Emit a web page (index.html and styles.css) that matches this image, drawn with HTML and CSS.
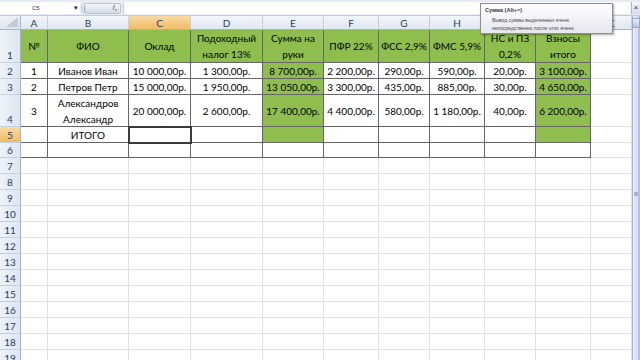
FILE: index.html
```html
<!DOCTYPE html>
<html lang="ru">
<head>
<meta charset="utf-8">
<title>Excel</title>
<link rel="stylesheet" href="styles.css">
</head>
<body>
<div class="fbar">
  <div class="namebox"><span class="nb-text">C5</span><span class="nb-arrow">▾</span></div>
  <div class="fxbtn"><span class="fx-circle"></span><span class="fx">f<sub>x</sub></span></div>
  <div class="finput"></div>
  <div class="fclose">×</div>
</div>
<div class="sheet-wrap">
  <div class="sheet">
    <div class="corner"></div>
    <div class="ch">A</div><div class="ch">B</div><div class="ch hl">C</div><div class="ch">D</div><div class="ch">E</div><div class="ch">F</div><div class="ch">G</div><div class="ch">H</div><div class="ch">I</div><div class="ch">J</div><div class="ch">K</div>

    <div class="rh">1</div>
    <div class="c b g">№</div><div class="c b g">ФИО</div><div class="c b g">Оклад</div><div class="c b g">Подоходный<br>налог 13%</div><div class="c b g">Сумма на<br>руки</div><div class="c b g">ПФР 22%</div><div class="c b g">ФСС 2,9%</div><div class="c b g">ФМС 5,9%</div><div class="c b g">НС и ПЗ<br>0,2%</div><div class="c b g">Взносы<br>итого</div><div class="c"></div>

    <div class="rh">2</div>
    <div class="c b">1</div><div class="c b">Иванов Иван</div><div class="c b">10 000,00р.</div><div class="c b">1 300,00р.</div><div class="c b g">8 700,00р.</div><div class="c b">2 200,00р.</div><div class="c b">290,00р.</div><div class="c b">590,00р.</div><div class="c b">20,00р.</div><div class="c b g">3 100,00р.</div><div class="c"></div>

    <div class="rh">3</div>
    <div class="c b">2</div><div class="c b">Петров Петр</div><div class="c b">15 000,00р.</div><div class="c b">1 950,00р.</div><div class="c b g">13 050,00р.</div><div class="c b">3 300,00р.</div><div class="c b">435,00р.</div><div class="c b">885,00р.</div><div class="c b">30,00р.</div><div class="c b g">4 650,00р.</div><div class="c"></div>

    <div class="rh">4</div>
    <div class="c b">3</div><div class="c b">Александров<br>Александр</div><div class="c b">20 000,00р.</div><div class="c b">2 600,00р.</div><div class="c b g">17 400,00р.</div><div class="c b">4 400,00р.</div><div class="c b">580,00р.</div><div class="c b">1 180,00р.</div><div class="c b">40,00р.</div><div class="c b g">6 200,00р.</div><div class="c"></div>

    <div class="rh hl">5</div>
    <div class="c b"></div><div class="c b">ИТОГО</div><div class="c b sel"></div><div class="c b"></div><div class="c b g"></div><div class="c b"></div><div class="c b"></div><div class="c b"></div><div class="c b"></div><div class="c b g"></div><div class="c"></div>

    <div class="rh">6</div>
    <div class="c b"></div><div class="c b"></div><div class="c b"></div><div class="c b"></div><div class="c b"></div><div class="c b"></div><div class="c b"></div><div class="c b"></div><div class="c b"></div><div class="c b"></div><div class="c"></div>

    <div class="rh">7</div><div class="c"></div><div class="c"></div><div class="c"></div><div class="c"></div><div class="c"></div><div class="c"></div><div class="c"></div><div class="c"></div><div class="c"></div><div class="c"></div><div class="c"></div>
    <div class="rh">8</div><div class="c"></div><div class="c"></div><div class="c"></div><div class="c"></div><div class="c"></div><div class="c"></div><div class="c"></div><div class="c"></div><div class="c"></div><div class="c"></div><div class="c"></div>
    <div class="rh">9</div><div class="c"></div><div class="c"></div><div class="c"></div><div class="c"></div><div class="c"></div><div class="c"></div><div class="c"></div><div class="c"></div><div class="c"></div><div class="c"></div><div class="c"></div>
    <div class="rh">10</div><div class="c"></div><div class="c"></div><div class="c"></div><div class="c"></div><div class="c"></div><div class="c"></div><div class="c"></div><div class="c"></div><div class="c"></div><div class="c"></div><div class="c"></div>
    <div class="rh">11</div><div class="c"></div><div class="c"></div><div class="c"></div><div class="c"></div><div class="c"></div><div class="c"></div><div class="c"></div><div class="c"></div><div class="c"></div><div class="c"></div><div class="c"></div>
    <div class="rh">12</div><div class="c"></div><div class="c"></div><div class="c"></div><div class="c"></div><div class="c"></div><div class="c"></div><div class="c"></div><div class="c"></div><div class="c"></div><div class="c"></div><div class="c"></div>
    <div class="rh">13</div><div class="c"></div><div class="c"></div><div class="c"></div><div class="c"></div><div class="c"></div><div class="c"></div><div class="c"></div><div class="c"></div><div class="c"></div><div class="c"></div><div class="c"></div>
    <div class="rh">14</div><div class="c"></div><div class="c"></div><div class="c"></div><div class="c"></div><div class="c"></div><div class="c"></div><div class="c"></div><div class="c"></div><div class="c"></div><div class="c"></div><div class="c"></div>
    <div class="rh">15</div><div class="c"></div><div class="c"></div><div class="c"></div><div class="c"></div><div class="c"></div><div class="c"></div><div class="c"></div><div class="c"></div><div class="c"></div><div class="c"></div><div class="c"></div>
    <div class="rh">16</div><div class="c"></div><div class="c"></div><div class="c"></div><div class="c"></div><div class="c"></div><div class="c"></div><div class="c"></div><div class="c"></div><div class="c"></div><div class="c"></div><div class="c"></div>
    <div class="rh">17</div><div class="c"></div><div class="c"></div><div class="c"></div><div class="c"></div><div class="c"></div><div class="c"></div><div class="c"></div><div class="c"></div><div class="c"></div><div class="c"></div><div class="c"></div>
    <div class="rh">18</div><div class="c"></div><div class="c"></div><div class="c"></div><div class="c"></div><div class="c"></div><div class="c"></div><div class="c"></div><div class="c"></div><div class="c"></div><div class="c"></div><div class="c"></div>
    <div class="rh">19</div><div class="c"></div><div class="c"></div><div class="c"></div><div class="c"></div><div class="c"></div><div class="c"></div><div class="c"></div><div class="c"></div><div class="c"></div><div class="c"></div><div class="c"></div>
  </div>
  <div class="vscroll">
    <div class="vbtn"></div>
    <div class="vgrip"></div>
  </div>
</div>
<div class="tip">
  <div class="tip-title">Сумма (Alt+=)</div>
  <div class="tip-line">Вывод суммы выделенных ячеек</div>
  <div class="tip-line">непосредственно после этих ячеек.</div>
</div>
</body>
</html>
```

FILE: styles.css
```css
html, body {
  margin: 0;
  padding: 0;
}
body {
  width: 640px;
  height: 360px;
  overflow: hidden;
  position: relative;
  background: #ffffff;
  font-family: Lato, "Noto Sans", sans-serif;
}

/* formula bar */
.fbar {
  height: 16px;
  box-sizing: border-box;
  display: flex;
  align-items: center;
  background: #e6ecf5;
  border-bottom: 1px solid #c2cbd9;
  padding-top: 1px;
}
.namebox {
  width: 80px;
  height: 12px;
  background: #ffffff;
  position: relative;
  font-family: "Liberation Sans", sans-serif;
  font-size: 6px;
  color: #333;
  display: flex;
  align-items: center;
}
.nb-text {
  margin-left: 32px;
}
.nb-arrow {
  margin-left: auto;
  margin-right: 2px;
  font-size: 7px;
  color: #222;
}
.fxbtn {
  width: 40px;
  height: 11px;
  margin-left: 1px;
  border-radius: 6px 2px 2px 6px;
  background: linear-gradient(#f4f6fa, #d5dce8);
  border: 1px solid #b9c3d3;
  box-sizing: border-box;
  display: flex;
  align-items: center;
  justify-content: space-between;
  padding: 0 3px 0 2px;
}
.fx-circle {
  width: 5px;
  height: 7px;
  border-left: 1px solid #8b97aa;
  border-radius: 50%;
  box-sizing: border-box;
}
.fx {
  font-family: "Liberation Serif", serif;
  font-style: italic;
  font-size: 7px;
  color: #444;
  line-height: 1;
}
.fx sub {
  font-size: 5px;
}
.finput {
  flex: 1;
  height: 12px;
  margin-left: 2px;
  background: #ffffff;
  border-left: 1px solid #c7cfdc;
}
.fclose {
  width: 8px;
  height: 12px;
  font-family: "Liberation Sans", sans-serif;
  font-size: 8px;
  line-height: 12px;
  text-align: center;
  color: #333;
  background: linear-gradient(#f2f4fb, #d3d9ec);
  border-left: 1px solid #a9b3cf;
}

/* sheet */
.sheet-wrap {
  display: flex;
}
.sheet {
  width: 632px;
  display: grid;
  grid-template-columns: 21px 27px 81px 62px 72px 61px 55px 51px 55px 51px 55px 41px;
  grid-template-rows: 14px 33px 16px 16px 32px 16px 15px repeat(13, 16px);
}
.corner {
  background: linear-gradient(#eef2f8, #dde5f0);
  border-right: 1px solid #9eb6ce;
  border-bottom: 1px solid #9eb6ce;
  box-sizing: border-box;
  position: relative;
}
.corner::after {
  content: "";
  position: absolute;
  right: 2px;
  bottom: 2px;
  width: 12px;
  height: 10px;
  background: #c2cbd9;
  clip-path: polygon(100% 0, 100% 100%, 0 100%);
}
.ch {
  background: linear-gradient(#f3f6fb, #dfe7f2);
  border-right: 1px solid #c5d1e0;
  border-bottom: 1px solid #9eb6ce;
  box-sizing: border-box;
  display: flex;
  align-items: center;
  justify-content: center;
  font-size: 10px;
  color: #27405f;
}
.rh {
  background: linear-gradient(90deg, #eef3f9, #dde6f2);
  border-right: 1px solid #9eb6ce;
  border-bottom: 1px solid #c5d1e0;
  box-sizing: border-box;
  display: flex;
  align-items: flex-end;
  justify-content: center;
  font-size: 10px;
  line-height: 13px;
  color: #27405f;
}
.hl {
  background: linear-gradient(#f9dba5, #f2ba63);
}
.c {
  border-right: 1px solid #dfe1e4;
  border-bottom: 1px solid #dfe1e4;
  box-sizing: border-box;
  display: flex;
  align-items: center;
  justify-content: center;
  text-align: center;
  white-space: nowrap;
  overflow: hidden;
  font-size: 10px;
  line-height: 16px;
  color: #000;
}
.b {
  border-color: #666666;
}
.g {
  background: #8fbe4e;
}
.sel {
  outline: 2px solid #3b3b3b;
  outline-offset: -1px;
  position: relative;
  z-index: 1;
}

/* scrollbar */
.vscroll {
  width: 8px;
  height: 344px;
  box-sizing: border-box;
  background: linear-gradient(90deg, #a7aed8 0 1px, #f1f2fb 1px 2px, #dfe2f4 2px 6px, #b9bfe2 6px);
  position: relative;
}
.vbtn {
  height: 10px;
  margin-top: 2px;
  background: linear-gradient(#e9edf9, #b8c3e6);
  border: 1px solid #9aa6d0;
  box-sizing: border-box;
}
.vgrip {
  position: absolute;
  left: 2px;
  top: 176px;
  width: 4px;
  height: 4px;
  background: #aab1d8;
}

/* tooltip */
.tip {
  position: absolute;
  left: 480px;
  top: 3px;
  width: 133px;
  height: 31px;
  box-sizing: border-box;
  background: linear-gradient(#ffffff, #e6e7ef);
  border: 1px solid #8f8f8f;
  box-shadow: 1px 1px 2px rgba(0, 0, 0, 0.35);
  font-family: "Liberation Sans", sans-serif;
  color: #4a4a4a;
  padding: 3px 4px 0 4px;
  z-index: 5;
}
.tip-title {
  font-size: 5.5px;
  font-weight: bold;
  color: #3a3a3a;
  line-height: 7px;
  height: 7px;
  margin-bottom: 2px;
}
.tip-line {
  margin-left: 7px;
  font-size: 5px;
  line-height: 8px;
  height: 8px;
  overflow: hidden;
}
```
